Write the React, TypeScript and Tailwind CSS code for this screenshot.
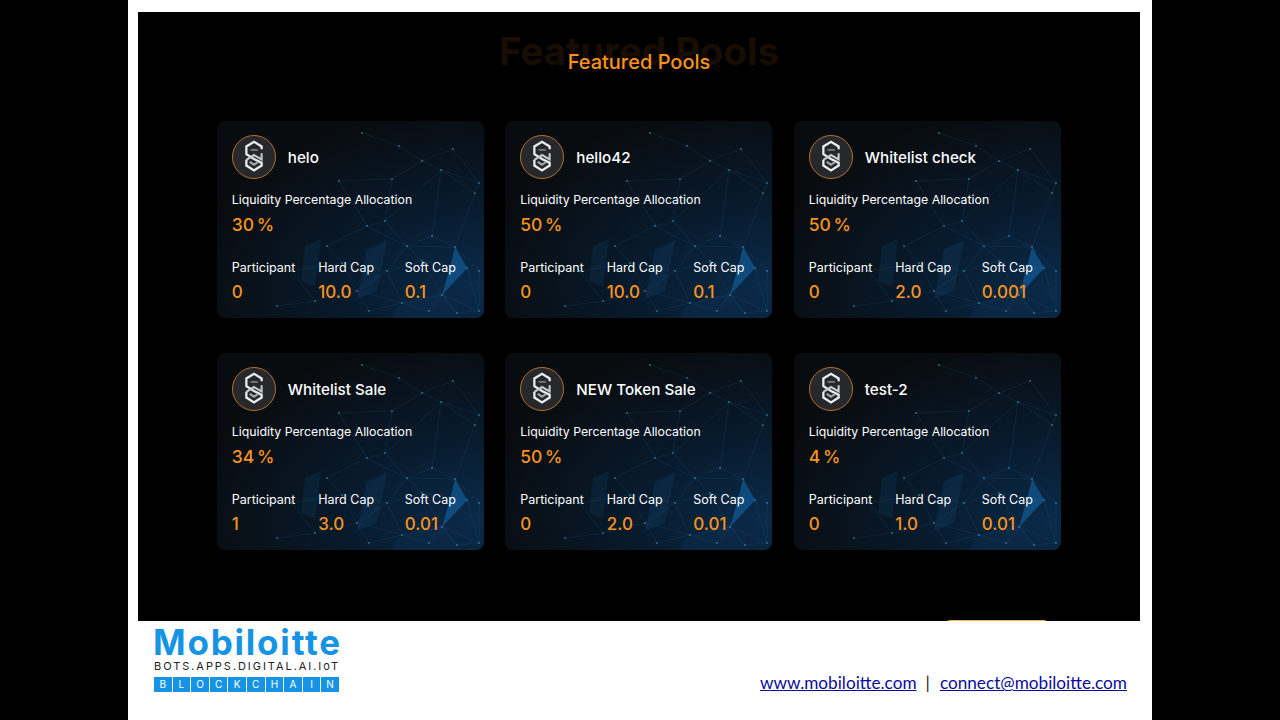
const pools = [
  { name: 'helo', pct: '30 %', participant: '0', hard: '10.0', soft: '0.1' },
  { name: 'hello42', pct: '50 %', participant: '0', hard: '10.0', soft: '0.1' },
  { name: 'Whitelist check', pct: '50 %', participant: '0', hard: '2.0', soft: '0.001' },
  { name: 'Whitelist Sale', pct: '34 %', participant: '1', hard: '3.0', soft: '0.01' },
  { name: 'NEW Token Sale', pct: '50 %', participant: '0', hard: '2.0', soft: '0.01' },
  { name: 'test-2', pct: '4 %', participant: '0', hard: '1.0', soft: '0.01' },
]

// mesh points of the card background, in card pixels
const nodes: [number, number][] = [
  [145, 12], [182, 25], [236, 28], [262, 62], [205, 40], [175, 58], [122, 60], [168, 100],
  [224, 49], [258, 72], [215, 115], [150, 105], [110, 125], [190, 125], [238, 126], [262, 150],
  [125, 142], [170, 150], [205, 140], [250, 147], [225, 174], [185, 182], [262, 190], [140, 170],
  [98, 180], [60, 185], [152, 190], [212, 190], [240, 192], [75, 150],
]
const links: [number, number][] = [
  [0, 1], [1, 4], [4, 2], [2, 3], [4, 5], [5, 6], [5, 7], [7, 8], [8, 4], [8, 9], [3, 9], [8, 10],
  [10, 13], [7, 13], [7, 11], [11, 12], [11, 13], [13, 14], [10, 14], [9, 14], [14, 15], [14, 19],
  [12, 16], [16, 17], [13, 17], [17, 18], [18, 19], [13, 18], [19, 20], [18, 20], [20, 21], [17, 21],
  [20, 22], [15, 22], [19, 22], [16, 23], [23, 21], [17, 23], [23, 24], [24, 25], [23, 26], [21, 26],
  [21, 27], [20, 27], [20, 28], [22, 28], [29, 16], [29, 24], [6, 11], [3, 8],
]

function Mesh() {
  return (
    <svg className="absolute inset-0 w-full h-full blur-[0.5px]" viewBox="0 0 267 197" preserveAspectRatio="none">
      <polygon points="88,125 104,118 98,165 84,160" fill="#123a5e" opacity="0.3" />
      <polygon points="150,128 170,120 160,170 140,178" fill="#14426b" opacity="0.3" />
      <polygon points="238,126 250,147 225,174 232,150" fill="#11609e" opacity="0.65" />
      <polygon points="180,185 225,170 245,197 175,197" fill="#0f3556" opacity="0.3" />
      {links.map(([a, b], i) => (
        <line key={i} x1={nodes[a][0]} y1={nodes[a][1]} x2={nodes[b][0]} y2={nodes[b][1]} stroke="#2f6ea3" strokeWidth="0.5" opacity="0.32" />
      ))}
      {nodes.map(([x, y], i) => (
        <circle key={i} cx={x} cy={y} r="1.1" fill="#3f8fc9" opacity="0.6" />
      ))}
    </svg>
  )
}

function PoolLogo() {
  return (
    <div className="w-11 h-11 rounded-full border border-[#b0702c] bg-[#26282b] shrink-0">
      <svg viewBox="0 0 44 44" className="w-full h-full" fill="none" strokeLinejoin="miter">
        <path d="M30 14V11L22 6L14 11V19L22 24L30 28V31L22 36L14 31V25" stroke="#ececec" strokeWidth="2.4" />
        <path d="M14 25L22 20L30 24.5V18" stroke="#c9c9c9" strokeWidth="2.2" />
        <path d="M17.5 27L22 30L26.5 27" stroke="#a5a5a5" strokeWidth="2.2" />
        <path d="M18.5 14.5H26" stroke="#7d7d7d" strokeWidth="1.8" />
      </svg>
    </div>
  )
}

function Stat({ label, value }: { label: string; value: string }) {
  return (
    <div>
      <div className="text-[12.5px] leading-[18px] text-white">{label}</div>
      <div className="mt-[3px] text-[17px] leading-[24px] font-medium text-[#f7931e]">{value}</div>
    </div>
  )
}

function PoolCard({ pool }: { pool: (typeof pools)[number] }) {
  return (
    <div className="relative h-[197px] rounded-lg overflow-hidden bg-[radial-gradient(ellipse_at_100%_85%,#0a2b4a_0%,#08192a_40%,#090c0f_78%)]">
      <Mesh />
      <div className="relative pl-[15px] pt-[14px]">
        <div className="flex items-center gap-3">
          <PoolLogo />
          <span className="pt-[2px] text-[15.2px] font-medium text-white">{pool.name}</span>
        </div>
        <div className="mt-[12px] text-[12.3px] leading-[18px] text-white">Liquidity Percentage Allocation</div>
        <div className="mt-[3px] text-[17.5px] leading-[26px] font-medium text-[#f7931e] [word-spacing:-2px]">{pool.pct}</div>
        <div className="mt-[21px] grid grid-cols-[86.5px_86.5px_1fr]">
          <Stat label="Participant" value={pool.participant} />
          <Stat label="Hard Cap" value={pool.hard} />
          <Stat label="Soft Cap" value={pool.soft} />
        </div>
      </div>
    </div>
  )
}

function MobiloitteLogo() {
  return (
    <div className="w-[186px] font-['Inter',sans-serif]">
      <div className="-ml-px text-[35px] leading-[34px] font-bold text-[#1793e6] tracking-[1.8px] whitespace-nowrap">Mobiloitte</div>
      <div className="text-[11px] leading-[14px] text-[#222] tracking-[1.95px] whitespace-nowrap">BOTS.APPS.DIGITAL.AI.IoT</div>
      <div className="mt-[4px] flex gap-px">
        {'BLOCKCHAIN'.split('').map((c, i) => (
          <span key={i} className="w-[17.6px] h-[15px] bg-[#1793e6] text-white text-[10px] leading-[15px] text-center">{c}</span>
        ))}
      </div>
    </div>
  )
}

export default function App() {
  return (
    <div className="w-full h-[720px] bg-black overflow-hidden">
      <div className="mx-auto w-[1024px] h-[720px] bg-white pt-3 font-['Inter',sans-serif]">
        <div className="ml-[10px] w-[1002px] h-[609px] bg-black overflow-hidden">
          <div className="grid justify-items-center pt-[20px]">
            <h2 className="col-start-1 row-start-1 text-[38.5px] leading-[38px] font-bold text-[#f7931e]/10">Featured Pools</h2>
            <h3 className="col-start-1 row-start-1 mt-[18px] text-[20px] leading-[24px] font-medium text-[#f7931e]">Featured Pools</h3>
          </div>
          <div className="mt-[47px] ml-[78.8px] w-[844px] grid grid-cols-3 gap-x-[21.5px] gap-y-[35px]">
            {pools.map((p) => (
              <PoolCard key={p.name} pool={p} />
            ))}
          </div>
          <div className="mt-[70px] ml-[805px] w-[108px] h-[30px] rounded-t-lg bg-[#f5b942]" />
        </div>
        <div className="flex justify-between items-start pl-[26px] pr-[25px] pt-[4px]">
          <MobiloitteLogo />
          <div className="mt-[47px] text-[17.2px] leading-[22px] text-[#222] font-['Lato',sans-serif]">
            <a className="underline text-[#0b0b9c]" href="#">www.mobiloitte.com</a>
            <span className="ml-[9px] mr-[10px]">|</span>
            <a className="underline text-[#0b0b9c]" href="#">connect@mobiloitte.com</a>
          </div>
        </div>
      </div>
    </div>
  )
}
